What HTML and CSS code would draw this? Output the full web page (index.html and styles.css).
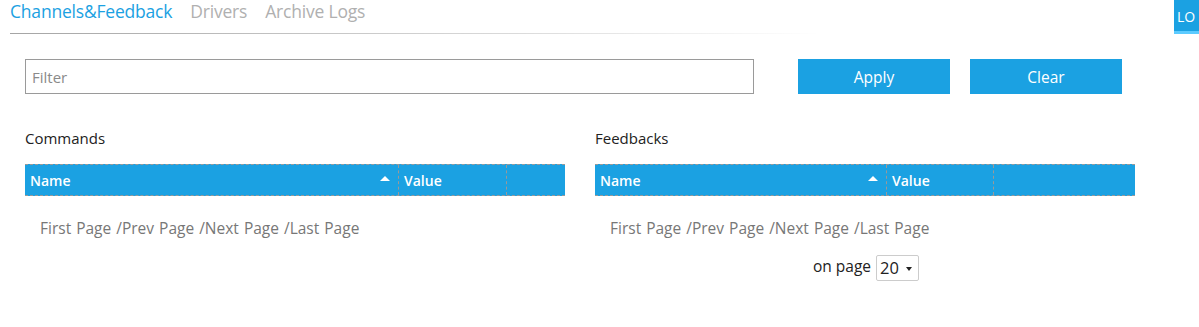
FILE: index.html
```html
<!DOCTYPE html>
<html>
<head>
<meta charset="utf-8">
<link rel="stylesheet" href="styles.css">
</head>
<body>
<div class="top">
  <nav class="tabs">
    <span class="tab active">Channels&amp;Feedback</span>
    <span class="tab">Drivers</span>
    <span class="tab">Archive Logs</span>
  </nav>
  <div class="user">LO</div>
</div>
<div class="filter-row">
  <input class="filter" type="text" placeholder="Filter">
  <button class="btn apply">Apply</button>
  <button class="btn clear">Clear</button>
</div>
<div class="panels">
  <section class="panel">
    <h2 class="panel-title">Commands</h2>
    <div class="thead">
      <div class="th name">Name<span class="sort"></span></div>
      <div class="th value">Value</div>
      <div class="th extra"></div>
    </div>
    <div class="pager">First Page /Prev Page /Next Page /Last Page</div>
  </section>
  <section class="panel right">
    <h2 class="panel-title">Feedbacks</h2>
    <div class="thead">
      <div class="th name">Name<span class="sort"></span></div>
      <div class="th value">Value</div>
      <div class="th extra"></div>
    </div>
    <div class="pager">First Page /Prev Page /Next Page /Last Page</div>
    <div class="per-page">on page <span class="select">20 <span class="caret"></span></span></div>
  </section>
</div>
</body>
</html>
```
FILE: styles.css
```css
* { box-sizing: border-box; }
body {
  margin: 0;
  font-family: "Open Sans", "Noto Sans", sans-serif;
  background: #fff;
  color: #222;
  width: 1199px;
  overflow: hidden;
}
.top {
  display: flex;
  justify-content: space-between;
  align-items: flex-start;
  height: 34px;
}
.tabs {
  margin-left: 10px;
  width: 810px;
  height: 34px;
  display: flex;
  gap: 18px;
  align-items: flex-start;
  background: linear-gradient(to right, #a5a5a5, #d8d8d8 60%, #ffffff) no-repeat left bottom / 100% 1px;
}
.tab {
  font-size: 17.5px;
  line-height: 23px;
  color: #b0b0b0;
  letter-spacing: -0.2px;
}
.tab.active { color: #1ba1e2; }
.user {
  width: 25px;
  height: 34px;
  background: #1ba1e2;
  border-bottom: 3px solid #5ccbff;
  color: #fff;
  font-size: 14px;
  padding: 9px 0 0 3px;
  line-height: 16px;
  overflow: hidden;
}
.filter-row {
  display: flex;
  margin-top: 25px;
  padding-left: 25px;
  height: 35px;
}
.filter {
  width: 729px;
  height: 35px;
  border: 1px solid #9a9a9a;
  padding: 0 6px;
  font-family: inherit;
  font-size: 15px;
  outline: none;
}
.filter::placeholder { color: #8a8a8a; }
.btn {
  width: 152px;
  height: 35px;
  border: none;
  background: #1ba1e2;
  color: #fff;
  font-family: inherit;
  font-size: 15.5px;
  padding: 0;
}
.apply { margin-left: 44px; }
.clear { margin-left: 20px; }
.panels {
  display: flex;
  gap: 30px;
  padding-left: 25px;
  margin-top: 34px;
}
.panel { width: 540px; }
.panel-title {
  margin: 0;
  font-size: 15px;
  font-weight: normal;
  line-height: 20px;
  color: #222;
}
.thead {
  margin-top: 16px;
  display: flex;
  height: 32px;
  background: #1ba1e2;
  border-top: 1px dashed #999;
  border-bottom: 1px dashed #999;
}
.th {
  color: #fff;
  font-size: 14px;
  font-weight: 600;
  line-height: 31px;
  padding-left: 5px;
  position: relative;
}
.th.name { width: 373px; }
.th.value { width: 109px; border-left: 1px dashed #999; border-right: 1px dashed #999; }
.th.extra { flex: 1; }
.right .th.name { width: 291px; }
.right .th.value { width: 108px; }
.sort {
  position: absolute;
  right: 8px;
  top: 11px;
  width: 0;
  height: 0;
  border-left: 5px solid transparent;
  border-right: 5px solid transparent;
  border-bottom: 5px solid #fff;
}
.pager {
  padding-left: 15px;
  margin-top: 21px;
  font-size: 15.5px;
  line-height: 22px;
  color: #777;
  word-spacing: 1px;
}
.per-page {
  margin-top: 14px;
  text-align: center;
  font-size: 15.5px;
  color: #222;
  line-height: 26px;
  padding-left: 2px;
}
.select {
  display: inline-block;
  width: 43px;
  height: 26px;
  border: 1px solid #ccc;
  border-radius: 2px;
  font-size: 16.5px;
  line-height: 24px;
  padding-left: 3px;
  text-align: left;
  vertical-align: middle;
  margin-left: 1px;
  position: relative;
}
.caret {
  position: absolute;
  right: 6px;
  top: 11px;
  border-left: 3.5px solid transparent;
  border-right: 3.5px solid transparent;
  border-top: 4px solid #222;
}
```
